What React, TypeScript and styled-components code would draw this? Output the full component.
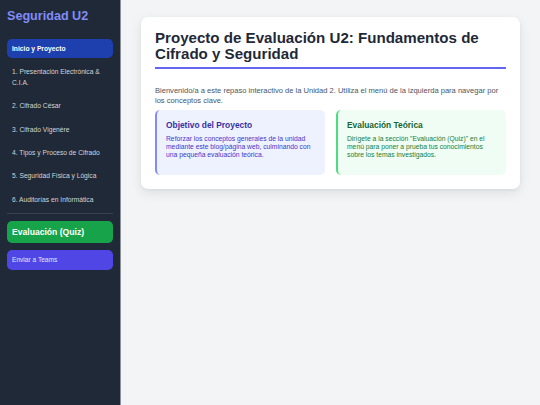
import React from "react";
import styled, { createGlobalStyle } from "styled-components";

const Global = createGlobalStyle`
  html, body { margin: 0; padding: 0; }
  body { font-family: "Liberation Sans", Arial, sans-serif; background: #f3f4f6; }
  #root { height: 405px; }
`;

const Layout = styled.div`
  display: flex;
  height: 405px;
  overflow: hidden;
`;

const Sidebar = styled.aside`
  width: 121px;
  flex-shrink: 0;
  background: #1f2937;
  border-right: 1.5px solid #8b9099;
  padding: 8px 7px;
  box-sizing: border-box;
  display: flex;
  flex-direction: column;
`;

const Brand = styled.h1`
  margin: 0 0 14.5px 0;
  font-size: 12.6px;
  line-height: 16px;
  font-weight: 700;
  color: #818cf8;
`;

const Nav = styled.nav`
  display: flex;
  flex-direction: column;
  gap: 4.4px;
`;

const NavItem = styled.div<{ $active?: boolean }>`
  padding: 4px 5px;
  border-radius: 5px;
  font-size: 6.7px;
  line-height: 11px;
  color: ${(p) => (p.$active ? "#ffffff" : "#d1d5db")};
  background: ${(p) => (p.$active ? "#1e40af" : "transparent")};
  font-weight: ${(p) => (p.$active ? 700 : 400)};
`;

const Divider = styled.hr`
  border: none;
  border-top: 1px solid #374151;
  margin: 4px 0 7px 0;
`;

const ActionButton = styled.div<{ $tone: "green" | "indigo" }>`
  border-radius: 5px;
  padding: 0 5px;
  color: ${(p) => (p.$tone === "green" ? "#ffffff" : "#e0e7ff")};
  background: ${(p) => (p.$tone === "green" ? "#16a34a" : "#4f46e5")};
  font-size: ${(p) => (p.$tone === "green" ? "8.6px" : "6.6px")};
  font-weight: ${(p) => (p.$tone === "green" ? 700 : 400)};
  height: ${(p) => (p.$tone === "green" ? "22px" : "20px")};
  display: flex;
  align-items: center;
  margin-bottom: 7px;
`;

const Main = styled.main`
  flex: 1;
  background: #f3f4f6;
  padding: 17px 20px;
  box-sizing: border-box;
`;

const Card = styled.section`
  background: #ffffff;
  border-radius: 7px;
  padding: 13px 14px 13.5px 14px;
  box-shadow: 0 4px 12px rgba(0, 0, 0, 0.09), 0 1px 3px rgba(0, 0, 0, 0.05);
`;

const Title = styled.h2`
  margin: 0;
  font-size: 15.1px;
  line-height: 15.8px;
  font-weight: 700;
  color: #1f2937;
  padding-bottom: 5px;
  border-bottom: 2px solid #6366f1;
`;

const Intro = styled.p`
  margin: 17.5px 0 3.5px 0;
  font-size: 7.55px;
  line-height: 10px;
  color: #4b5563;
`;

const Boxes = styled.div`
  display: grid;
  grid-template-columns: 1fr 1fr;
  gap: 11px;
`;

const InfoBox = styled.div<{ $tone: "indigo" | "green" }>`
  background: ${(p) => (p.$tone === "indigo" ? "#eef2ff" : "#f0fdf4")};
  border-left: 2px solid ${(p) => (p.$tone === "indigo" ? "#818cf8" : "#4ade80")};
  border-radius: 5px;
  padding: 10px 9px 15.5px 9px;
`;

const BoxTitle = styled.h3<{ $tone: "indigo" | "green" }>`
  margin: 0 0 4px 0;
  font-size: 8.4px;
  line-height: 11px;
  font-weight: 700;
  color: ${(p) => (p.$tone === "indigo" ? "#3730a3" : "#166534")};
`;

const BoxText = styled.p<{ $tone: "indigo" | "green" }>`
  margin: 0;
  font-size: 6.75px;
  line-height: 8.4px;
  color: ${(p) => (p.$tone === "indigo" ? "#4338ca" : "#15803d")};
`;

export default function App() {
  return (
    <>
      <Global />
      <Layout>
        <Sidebar>
          <Brand>Seguridad U2</Brand>
          <Nav>
            <NavItem $active>Inicio y Proyecto</NavItem>
            <NavItem>1. Presentación Electrónica &amp; C.I.A.</NavItem>
            <NavItem>2. Cifrado César</NavItem>
            <NavItem>3. Cifrado Vigenère</NavItem>
            <NavItem>4. Tipos y Proceso de Cifrado</NavItem>
            <NavItem>5. Seguridad Física y Lógica</NavItem>
            <NavItem>6. Auditorías en Informática</NavItem>
          </Nav>
          <Divider />
          <ActionButton $tone="green">Evaluación (Quiz)</ActionButton>
          <ActionButton $tone="indigo">Enviar a Teams</ActionButton>
        </Sidebar>
        <Main>
          <Card>
            <Title>Proyecto de Evaluación U2: Fundamentos de Cifrado y Seguridad</Title>
            <Intro>
              Bienvenido/a a este repaso interactivo de la Unidad 2. Utiliza el menú de la izquierda para navegar por los conceptos clave.
            </Intro>
            <Boxes>
              <InfoBox $tone="indigo">
                <BoxTitle $tone="indigo">Objetivo del Proyecto</BoxTitle>
                <BoxText $tone="indigo">
                  Reforzar los conceptos generales de la unidad mediante este blog/página web, culminando con una pequeña evaluación teórica.
                </BoxText>
              </InfoBox>
              <InfoBox $tone="green">
                <BoxTitle $tone="green">Evaluación Teórica</BoxTitle>
                <BoxText $tone="green">
                  Dirígete a la sección "Evaluación (Quiz)" en el menú para poner a prueba tus conocimientos sobre los temas investigados.
                </BoxText>
              </InfoBox>
            </Boxes>
          </Card>
        </Main>
      </Layout>
    </>
  );
}
